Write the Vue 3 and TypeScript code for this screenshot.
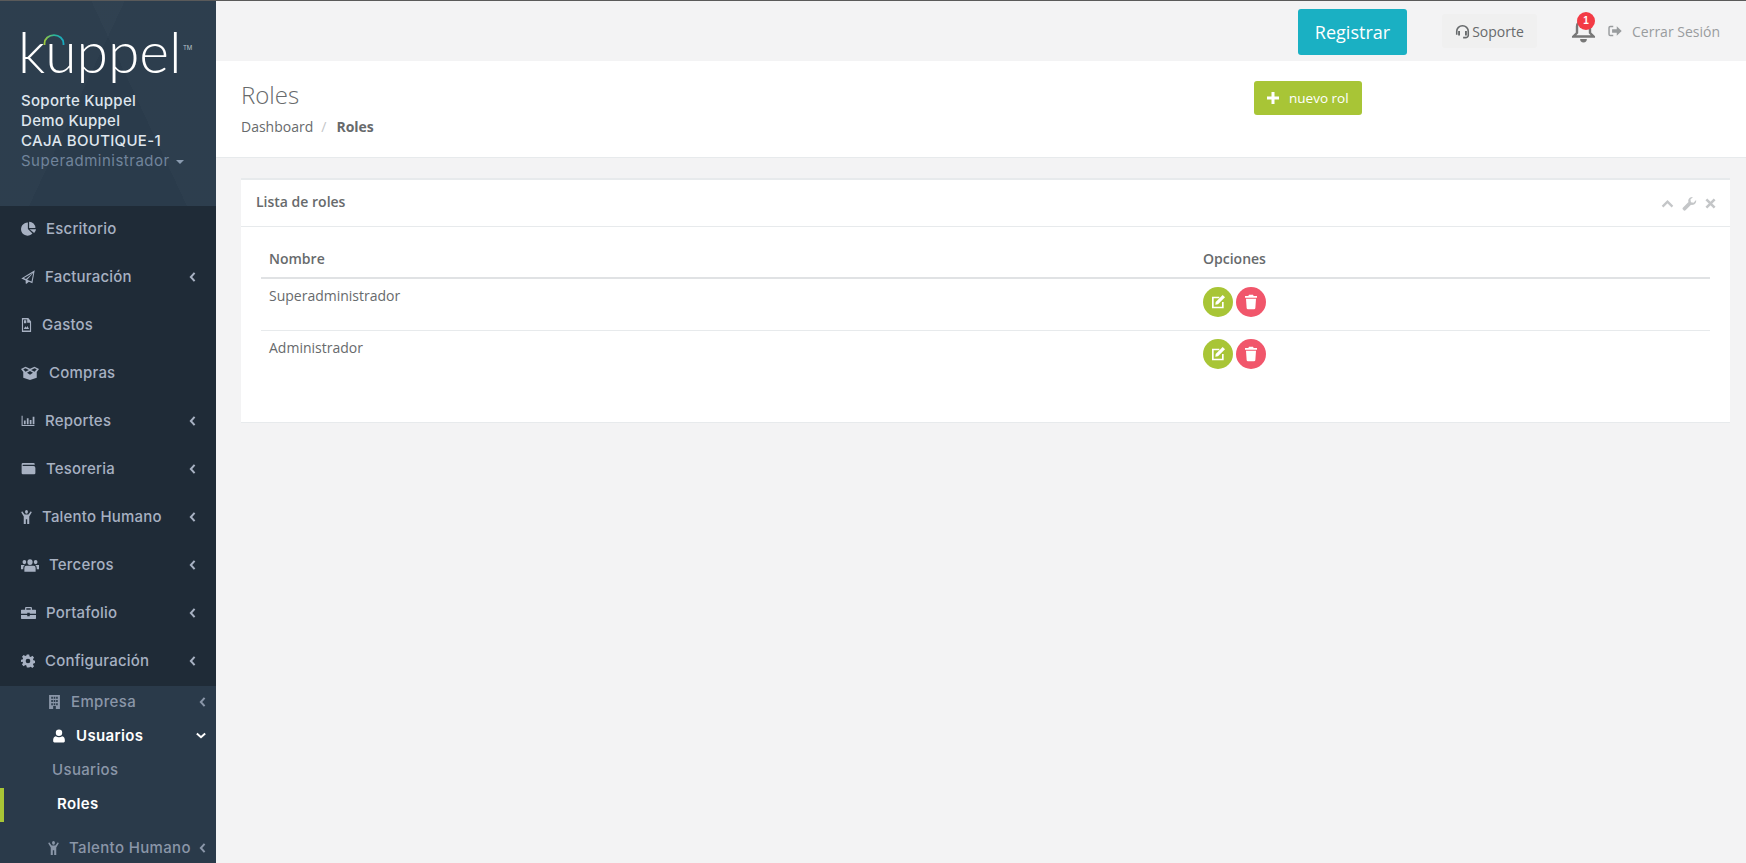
<script setup lang="ts">
interface MenuItem {
  label: string
  icon: string
  width: number
  height: number
  arrow?: boolean
}

const icons: Record<string, string> = {
  pie: 'M11 2.500v10.300l7.300 7.300A10.500 10.500 0 1 1 11 2.500zM13 1a10 10 0 0 1 10 10H13zM13.800 13H24a10.400 10.400 0 0 1-3 6.200z',
  plane: 'M23.500.5 19.500 22.500 13.500 20 9.500 23.500 8 23V18L.5 14.500zM20.800 4.500 5 13.500 8.500 15.500zM21 5 10.500 16.500 18 19.500z',
  file: 'M2 0h14l6 6v18H2zM4.500 2.500v19h15V8h-6V2.500zM6.500 4h5v5h-5zM6 19l3.500-5 2.500 2.500 2-3 3.500 5.500z',
  box: 'M0 6l6-3.500 6 3 6-3L24 6l-3 4.500V19l-9 3.500L3 19v-8.500zM6 5 3 6.500 6 10l4.500-2.500zM18 5l-4.500 2.500L18 10l3-3.500zM12 9l-4 2.500 4 3 4-3z',
  chart: 'M1 3h1.800v17.200H23V22H1zM5 12h3v7H5zM10 8h3v11h-3zM15 11h3v8h-3zM20 5h3v14h-3z',
  wallet: 'M3 3h17a2 2 0 0 1 2 2v1H3.500a1 1 0 0 0 0 2H20a3 3 0 0 1 3 3v8a2 2 0 0 1-2 2H3a2 2 0 0 1-2-2V5a2 2 0 0 1 2-2z',
  child: 'M12 0a3.200 3.200 0 1 1 0 6.400A3.200 3.200 0 0 1 12 0zM2.500 2 8 7.500h8L21.500 2l2 2-5.500 7v13h-4.500v-8h-3v8H6V11L.5 4z',
  users: 'M12 5a3.500 3.500 0 1 1 0 7 3.500 3.500 0 0 1 0-7zM4.500 6a2.500 2.500 0 1 1 0 5 2.500 2.500 0 0 1 0-5zM19.500 6a2.500 2.500 0 1 1 0 5 2.500 2.500 0 0 1 0-5zM7 13h10a2.500 2.500 0 0 1 2.500 2.500V20h-15v-4.500A2.500 2.500 0 0 1 7 13zM0 12h5a4 4 0 0 0-2 3.500V17H0zM19 12h5v5h-3v-1.500A4 4 0 0 0 19 12z',
  briefcase: 'M8 3h8a1.500 1.500 0 0 1 1.500 1.500V7H23a1 1 0 0 1 1 1v5H14v-1.500h-4V13H0V8a1 1 0 0 1 1-1h5.500V4.500A1.500 1.500 0 0 1 8 3zM8.500 5v2h7V5zM0 15h10v2h4v-2h10v5a1 1 0 0 1-1 1H1a1 1 0 0 1-1-1z',
  cog: 'M10 1h4l.7 3.200 2 .8 2.800-1.800 2.800 2.800-1.800 2.800.8 2 3.200.7v4l-3.200.7-.8 2 1.800 2.800-2.800 2.800-2.800-1.800-2 .8L14 23h-4l-.7-3.200-2-.8-2.800 1.800-2.800-2.800 1.800-2.800-.8-2L-.5 14v-4l3.200-.7.8-2-1.800-2.800 2.800-2.800 2.800 1.800 2-.8zM12 8a4 4 0 1 0 0 8 4 4 0 0 0 0-8z',
  building: 'M2 0h20v24h-7.500v-5h-5v5H2zM6 3v3.500h3V3zM10.500 3v3.500h3V3zM15 3v3.500h3V3zM6 8.500V12h3V8.500zM10.500 8.500V12h3V8.500zM15 8.500V12h3V8.500zM6 14v3.500h3V14zM10.500 14v3.500h3V14zM15 14v3.500h3V14z',
  user: 'M12 1a5.500 5.500 0 1 1 0 11 5.500 5.500 0 0 1 0-11zM6.500 12.500c3 2 8 2 11 0 3 .5 4.500 3 4.500 6.500v2a2 2 0 0 1-2 2H4a2 2 0 0 1-2-2v-2c0-3.500 1.500-6 4.500-6.500z',
}

const menu: MenuItem[] = [
  { label: 'Escritorio', icon: 'pie', width: 15, height: 15 },
  { label: 'Facturación', icon: 'plane', width: 14, height: 14, arrow: true },
  { label: 'Gastos', icon: 'file', width: 11, height: 14 },
  { label: 'Compras', icon: 'box', width: 18, height: 16 },
  { label: 'Reportes', icon: 'chart', width: 14, height: 13, arrow: true },
  { label: 'Tesoreria', icon: 'wallet', width: 15, height: 15, arrow: true },
  { label: 'Talento Humano', icon: 'child', width: 11, height: 14, arrow: true },
  { label: 'Terceros', icon: 'users', width: 18, height: 20, arrow: true },
  { label: 'Portafolio', icon: 'briefcase', width: 15, height: 16, arrow: true },
  { label: 'Configuración', icon: 'cog', width: 14, height: 14, arrow: true },
]

const roles = ['Superadministrador', 'Administrador']
</script>

<template>
  <div class="app">
    <aside class="sidebar">
      <div class="profile">
        <div class="logo">
          <span class="logo-word">kuppel</span>
          <span class="logo-tm">TM</span>
          <svg class="logo-arc" viewBox="0 0 22 12" width="22" height="12">
            <defs>
              <linearGradient id="arc" x1="0" x2="1" y1="0" y2="0">
                <stop offset="0" stop-color="#9fc93c" />
                <stop offset="0.5" stop-color="#2bb59a" />
                <stop offset="1" stop-color="#17a9c0" />
              </linearGradient>
            </defs>
            <path d="M1.500 11V9.500a9 8 0 0 1 19 0V11" fill="none" stroke="url(#arc)" stroke-width="1.800" />
          </svg>
        </div>
        <div class="profile-line">Soporte Kuppel</div>
        <div class="profile-line">Demo Kuppel</div>
        <div class="profile-line">CAJA BOUTIQUE-1</div>
        <div class="profile-role">Superadministrador <i class="caret"></i></div>
      </div>

      <nav class="menu">
        <a v-for="item in menu" :key="item.label" class="menu-item">
          <svg class="icon" viewBox="0 0 24 24" preserveAspectRatio="none" :style="{ width: item.width + 'px', height: item.height + 'px' }">
            <path :d="icons[item.icon]" fill-rule="evenodd" />
          </svg>
          <span>{{ item.label }}</span>
          <svg v-if="item.arrow" class="chev" viewBox="0 0 8 12" width="7" height="10">
            <path d="M6.500 1 2 6l4.500 5" fill="none" stroke="currentColor" stroke-width="2.400" />
          </svg>
        </a>
      </nav>

      <div class="submenu">
        <a class="sub-item sub-company">
          <svg class="icon" viewBox="0 0 24 24" preserveAspectRatio="none" width="13" height="14"><path :d="icons.building" fill-rule="evenodd" /></svg>
          <span>Empresa</span>
          <svg class="chev" viewBox="0 0 8 12" width="7" height="10"><path d="M6.500 1 2 6l4.500 5" fill="none" stroke="currentColor" stroke-width="2.400" /></svg>
        </a>
        <a class="sub-item sub-users">
          <svg class="icon" viewBox="0 0 24 24" width="14" height="14"><path :d="icons.user" fill-rule="evenodd" /></svg>
          <span>Usuarios</span>
          <svg class="chev-down" viewBox="0 0 12 8" width="10" height="7"><path d="M1 1.500 6 6l5-4.500" fill="none" stroke="currentColor" stroke-width="2.400" /></svg>
        </a>
        <a class="sub-leaf">Usuarios</a>
        <a class="sub-leaf active">Roles</a>
        <a class="sub-item sub-talent">
          <svg class="icon" viewBox="0 0 24 24" preserveAspectRatio="none" width="11" height="14"><path :d="icons.child" fill-rule="evenodd" /></svg>
          <span>Talento Humano</span>
          <svg class="chev" viewBox="0 0 8 12" width="7" height="10"><path d="M6.500 1 2 6l4.500 5" fill="none" stroke="currentColor" stroke-width="2.400" /></svg>
        </a>
      </div>
    </aside>

    <main class="main">
      <header class="topbar">
        <button class="register">Registrar</button>
        <a class="support">
          <svg viewBox="0 0 24 24" width="15" height="15">
            <path d="M12 1.500A10.500 10.500 0 0 0 1.500 12v5h2.500v-5a8 8 0 0 1 16 0v6c0 1.500-1.500 2.500-3.500 2.500H13V23h3.500c3.500 0 6-2 6-5v-6A10.500 10.500 0 0 0 12 1.500z" fill="#676a6c" />
            <path d="M5 11h3v7.500H5zM16 11h3v7.500h-3z" fill="#676a6c" />
          </svg>
          <span>Soporte</span>
        </a>
        <a class="bell">
          <svg viewBox="0 0 26 28" width="25" height="27">
            <path d="M13 3a8 8 0 0 1 8 8v6l4 4v1.500H1V21l4-4v-6a8 8 0 0 1 8-8zM13 5.500A5.500 5.500 0 0 0 7.500 11v7l-2 2h15l-2-2v-7A5.500 5.500 0 0 0 13 5.500z" fill="#777" fill-rule="evenodd" />
            <path d="M9.500 24h7a3.500 3.500 0 0 1-7 0z" fill="#777" />
          </svg>
          <b class="badge">1</b>
        </a>
        <a class="logout">
          <svg viewBox="0 0 24 20" width="14" height="12">
            <path d="M9 1H4a3.500 3.500 0 0 0-3.500 3.500v11A3.500 3.500 0 0 0 4 19h5v-2.500H4a1 1 0 0 1-1-1v-11a1 1 0 0 1 1-1h5zM15 2l8.500 8-8.500 8v-5H7V7h8z" fill="#999c9e" />
          </svg>
          <span>Cerrar Sesión</span>
        </a>
      </header>

      <section class="heading">
        <div>
          <h2>Roles</h2>
          <div class="crumbs">
            <span>Dashboard</span>
            <i>/</i>
            <b>Roles</b>
          </div>
        </div>
        <div>
          <button class="new-role">
            <svg viewBox="0 0 12 12" width="12" height="12"><path d="M4.500 0h3v4.500H12v3H7.500V12h-3V7.500H0v-3h4.500z" fill="#fff" /></svg>
            <span>nuevo rol</span>
          </button>
        </div>
      </section>

      <section class="content">
        <div class="card">
          <div class="card-title">
            <h5>Lista de roles</h5>
            <div class="card-tools">
              <svg viewBox="0 0 14 10" width="13" height="9"><path d="M1.500 8.500 7 3l5.500 5.500" fill="none" stroke="#c4c6c8" stroke-width="2.600" /></svg>
              <svg viewBox="0 0 24 24" width="15" height="15"><path d="M22.500 6.500c.8 3-1 6.500-4.500 7.500-1.500.4-2.600.2-3.500-.2L6 22.500a2.600 2.600 0 0 1-4-.5 2.600 2.600 0 0 1-.3-3.800l8.700-8.600c-.4-1-.6-2.300-.2-3.600C11 3 14.500 1 17.500 1.600l-4 4 .8 4.200 4.200.8z" fill="#c4c6c8" /></svg>
              <svg viewBox="0 0 12 12" width="11" height="11"><path d="M1.500 1.500l9 9M10.500 1.500l-9 9" fill="none" stroke="#c4c6c8" stroke-width="2.800" /></svg>
            </div>
          </div>
          <div class="card-body">
            <div class="table-row table-head">
              <div>Nombre</div>
              <div>Opciones</div>
            </div>
            <div v-for="role in roles" :key="role" class="table-row">
              <div class="role-name">{{ role }}</div>
              <div class="actions">
                <button class="circle edit">
                  <svg viewBox="0 0 24 24" width="16" height="16">
                    <path d="M3 4h11v2.500H5.500v12.500H18v-7h2.500V21.500H3z" fill="#fff" />
                    <path d="M19 1.500l3.500 3.500L12 15.500l-4 .5.500-4z" fill="#fff" />
                  </svg>
                </button>
                <button class="circle remove">
                  <svg viewBox="0 0 24 24" width="16" height="16">
                    <path d="M9 1h6l1 2h5v2.500H3V3h5zM4.500 7h15l-1 14.500a2 2 0 0 1-2 1.500h-9a2 2 0 0 1-2-1.500z" fill="#fff" />
                  </svg>
                </button>
              </div>
            </div>
          </div>
        </div>
      </section>
    </main>
  </div>
</template>

<style>
html,
body {
  margin: 0;
  height: 100%;
  overflow: hidden;
  background: #f3f3f4;
}
</style>

<style scoped>
.app {
  display: grid;
  grid-template-columns: 216px 1fr;
  height: 863px;
  box-sizing: border-box;
  border-top: 1px solid #5a5a5a;
  overflow: hidden;
  font-family: "Open Sans", "Liberation Sans", sans-serif;
  font-size: 13px;
  color: #676a6c;
}

.sidebar {
  background: #2a3a4a;
  overflow: hidden;
  font-family: "Inter", "Noto Sans", sans-serif;
}

.profile {
  height: 205px;
  box-sizing: border-box;
  padding: 20px 0 0 21px;
  background:
    linear-gradient(115deg, rgba(255, 255, 255, 0.015) 0 40%, transparent 40% 100%),
    linear-gradient(65deg, transparent 0 60%, rgba(255, 255, 255, 0.015) 60% 100%),
    #2a3b4b;
}

.logo {
  position: relative;
  height: 70px;
}

.logo-word {
  display: block;
  margin-left: -3px;
  font-family: "Lato", sans-serif;
  font-size: 57px;
  line-height: 60px;
  font-weight: 300;
  color: #fff;
}

.logo-tm {
  position: absolute;
  left: 162px;
  top: 23px;
  font-size: 6px;
  color: #b8c1cb;
}

.logo-arc {
  position: absolute;
  left: 22px;
  top: 13px;
}

.profile-line {
  font-size: 15px;
  line-height: 20px;
  font-weight: 500;
  letter-spacing: 0.3px;
  color: #dfe6ee;
}

.profile-role {
  font-size: 15px;
  line-height: 20px;
  letter-spacing: 0.5px;
  color: #71849b;
}

.caret {
  display: inline-block;
  margin-left: 2px;
  vertical-align: middle;
  border-top: 4px solid #8a9bb0;
  border-left: 4px solid transparent;
  border-right: 4px solid transparent;
}

.menu {
  background: #1f2b37;
}

.menu-item {
  display: flex;
  align-items: center;
  gap: 10px;
  height: 48px;
  box-sizing: border-box;
  padding: 0 20px 3px 21px;
  font-size: 15px;
  font-weight: 500;
  letter-spacing: 0.2px;
  color: #a7b1c2;
}

.icon {
  flex: none;
  fill: currentColor;
}

.chev {
  margin-left: auto;
}

.submenu {
  color: #8a96a8;
  font-size: 15px;
  font-weight: 500;
  letter-spacing: 0.35px;
  white-space: nowrap;
}

.sub-item {
  display: flex;
  align-items: center;
  height: 34px;
  box-sizing: border-box;
  padding: 0 10px 3px 48px;
}

.sub-item .icon {
  margin-right: 10px;
}

.sub-users {
  padding-left: 52px;
  color: #fff;
  font-weight: 600;
}

.sub-users .chev-down {
  margin-left: auto;
}

.sub-talent {
  margin-top: 10px;
}

.sub-leaf {
  display: flex;
  align-items: center;
  height: 34px;
  box-sizing: border-box;
  padding: 0 0 3px 52px;
}

.sub-leaf.active {
  padding-left: 53px;
  border-left: 4px solid #a8c536;
  color: #fff;
  font-weight: 600;
}

.main {
  min-width: 0;
}

.topbar {
  display: flex;
  align-items: center;
  height: 60px;
  padding-right: 26px;
  justify-content: flex-end;
  background: #f3f3f4;
}

.register {
  width: 109px;
  height: 46px;
  margin: 2px 35px 0 0;
  border: 0;
  border-radius: 3px;
  background: #1ab0c3;
  color: #fff;
  font: 400 18px "Open Sans", sans-serif;
}

.support {
  display: flex;
  align-items: center;
  gap: 2px;
  justify-content: center;
  width: 95px;
  height: 34px;
  margin-right: 34px;
  border-radius: 3px;
  background: #f0f0f0;
  font-size: 14px;
}

.bell {
  position: relative;
  display: block;
  width: 25px;
  height: 30px;
  margin-right: 12px;
}

.badge {
  position: absolute;
  left: 6px;
  top: -4px;
  width: 18px;
  height: 18px;
  border-radius: 50%;
  background: #f33b45;
  color: #fff;
  font: 700 10px/18px "Liberation Sans", sans-serif;
  text-align: center;
}

.logout {
  display: flex;
  align-items: center;
  gap: 10px;
  color: #999c9e;
  font-size: 14px;
}

.heading {
  display: grid;
  grid-template-columns: 1013px 1fr;
  height: 97px;
  box-sizing: border-box;
  padding: 20px 0 0 25px;
  background: #fff;
  border-bottom: 1px solid #e7eaec;
}

.heading h2 {
  margin: 0;
  font-size: 24px;
  line-height: 28px;
  font-weight: 300;
}

.crumbs {
  display: flex;
  align-items: center;
  gap: 8px;
  margin-top: 8px;
  font-size: 14px;
  line-height: 20px;
}

.crumbs i {
  font-style: normal;
  color: #c4c6c8;
}

.crumbs b {
  margin-left: 2px;
}

.new-role {
  display: flex;
  align-items: center;
  gap: 10px;
  width: 108px;
  height: 34px;
  padding: 0 0 0 13px;
  border: 0;
  border-radius: 3px;
  background: #a8c536;
  color: #fff;
  font: 400 13.5px "Open Sans", sans-serif;
}

.content {
  padding: 20px 16px 0 25px;
}

.card {
  height: 245px;
  box-sizing: border-box;
  background: #fff;
  border-top: 2px solid #e7eaec;
  border-bottom: 1px solid #e7eaec;
}

.card-title {
  display: flex;
  align-items: center;
  justify-content: space-between;
  height: 47px;
  box-sizing: border-box;
  padding: 0 14px 0 15px;
  border-bottom: 1px solid #e7eaec;
}

.card-title h5 {
  margin: 0 0 3px;
  font-size: 14px;
  font-weight: 600;
}

.card-tools {
  display: flex;
  align-items: center;
  gap: 8px;
}

.card-body {
  padding: 11px 20px 0;
}

.table-row {
  display: grid;
  grid-template-columns: 934px 1fr;
  height: 52px;
  box-sizing: border-box;
  border-bottom: 1px solid #e7eaec;
  padding: 8px 8px 0;
  font-size: 14px;
  line-height: 20px;
}

.table-row:last-child {
  border-bottom: 0;
}

.table-head {
  height: 41px;
  padding-top: 11px;
  border-bottom: 2px solid #e0e2e4;
  font-weight: 600;
}

.role-name {
  margin-top: -1px;
}

.actions {
  display: flex;
  gap: 3px;
}

.circle {
  display: flex;
  align-items: center;
  justify-content: center;
  width: 30px;
  height: 30px;
  padding: 0;
  border: 0;
  border-radius: 50%;
}

.edit {
  background: #a8c536;
}

.remove {
  background: #f1566b;
}
</style>
